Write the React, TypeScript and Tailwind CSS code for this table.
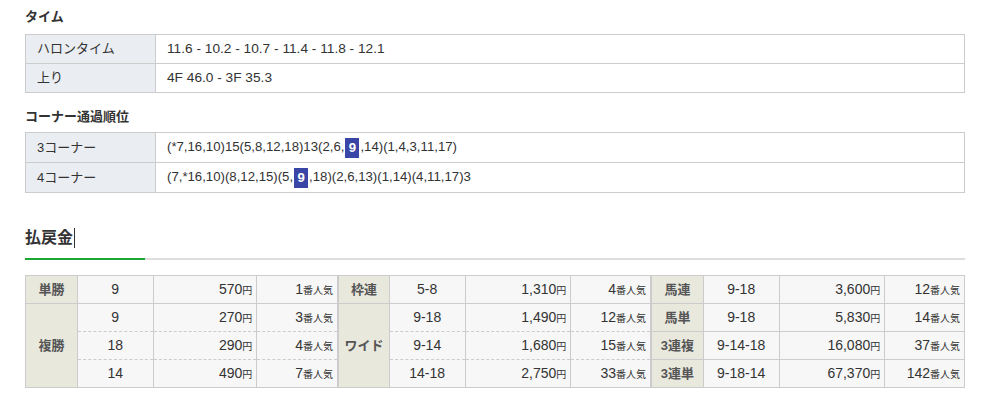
import type { ReactNode } from 'react';

const FONT = "font-['Liberation_Sans','Noto_Sans_CJK_JP',sans-serif]";

const Hl = ({ n }: { n: string }) => (
  <span className="inline-block w-[14px] h-[20px] leading-[20px] mx-[1px] text-center font-bold text-white bg-[#3a46a6] align-middle">
    {n}
  </span>
);

const InfoTable = ({ rows, h, size }: { rows: [string, ReactNode][]; h: string; size: string }) => (
  <table className="w-full table-fixed border-collapse border border-[#ccc] text-[#333]">
    <colgroup>
      <col className="w-[130px]" />
      <col />
    </colgroup>
    <tbody>
      {rows.map(([label, val]) => (
        <tr key={label} className={h}>
          <td className="border border-[#ccc] bg-[#eaedf1] pl-[11px] text-[13px]">{label}</td>
          <td className={`border border-[#ccc] pl-[11px] whitespace-nowrap ${size}`}>{val}</td>
        </tr>
      ))}
    </tbody>
  </table>
);

type Row = { no: string; pay: string; pop: string };
type Group = { label: string; rows: Row[] };

const solid = 'border-x border-t border-[#ccc]';
const dashed = 'border-x border-[#ccc] [border-top:1px_dashed_#ccc]';

const PayTable = ({ groups, widths }: { groups: Group[]; widths: string[] }) => (
  <table className="table-fixed border-collapse border border-[#ccc] text-[14px] text-[#333]">
    <colgroup>
      {widths.map((w, i) => (
        <col key={i} className={w} />
      ))}
    </colgroup>
    <tbody>
      {groups.flatMap((g) =>
        g.rows.map((r, i) => {
          const c = i === 0 ? solid : dashed;
          return (
            <tr key={g.label + i} className="h-[28px]">
              {i === 0 && (
                <th
                  rowSpan={g.rows.length}
                  className={`${solid} bg-[#e8e8dd] text-[13px] font-bold text-[#555] text-center align-middle`}
                >
                  {g.label}
                </th>
              )}
              <td className={`${c} bg-[#f7f7f7] text-center`}>{r.no}</td>
              <td className={`${c} bg-[#f7f7f7] text-right pr-[4px]`}>
                {r.pay}
                <span className="text-[10px]">円</span>
              </td>
              <td className={`${c} bg-[#f7f7f7] text-right pr-[4px]`}>
                {r.pop}
                <span className="text-[10px]">番人気</span>
              </td>
            </tr>
          );
        })
      )}
    </tbody>
  </table>
);

export default function App() {
  return (
    <div className={`${FONT} w-[940px] ml-[25px] pt-[7px] bg-white`}>
      <h3 className="text-[13px] font-bold leading-[20px] text-[#333] mb-[7px]">タイム</h3>
      <InfoTable
        h="h-[29px]"
        size="text-[13.7px]"
        rows={[
          ['ハロンタイム', '11.6 - 10.2 - 10.7 - 11.4 - 11.8 - 12.1'],
          ['上り', '4F 46.0 - 3F 35.3'],
        ]}
      />

      <h3 className="text-[13px] font-bold leading-[20px] text-[#333] mt-[14px] mb-[5px]">コーナー通過順位</h3>
      <InfoTable
        h="h-[30px]"
        size="text-[13.2px]"
        rows={[
          [
            '3コーナー',
            <>
              (*7,16,10)15(5,8,12,18)13(2,6,<Hl n="9" />,14)(1,4,3,11,17)
            </>,
          ],
          [
            '4コーナー',
            <>
              (7,*16,10)(8,12,15)(5,<Hl n="9" />,18)(2,6,13)(1,14)(4,11,17)3
            </>,
          ],
        ]}
      />

      <div className="mt-[33px] flex items-center h-[24px]">
        <h2 className="text-[16px] font-bold text-[#333] leading-[24px]">払戻金</h2>
        <span className="ml-[1px] w-px h-[20px] bg-[#333]" />
      </div>
      <div className="mt-[8px] h-[2px] bg-[#ddd]">
        <div className="w-[120px] h-[2px] bg-[#1aa734]" />
      </div>

      <div className="mt-[15px] flex">
        <PayTable
          widths={['w-[52px]', 'w-[76px]', 'w-[104px]', 'w-[81px]']}
          groups={[
            { label: '単勝', rows: [{ no: '9', pay: '570', pop: '1' }] },
            {
              label: '複勝',
              rows: [
                { no: '9', pay: '270', pop: '3' },
                { no: '18', pay: '290', pop: '4' },
                { no: '14', pay: '490', pop: '7' },
              ],
            },
          ]}
        />
        <PayTable
          widths={['w-[51px]', 'w-[76px]', 'w-[106px]', 'w-[80px]']}
          groups={[
            { label: '枠連', rows: [{ no: '5-8', pay: '1,310', pop: '4' }] },
            {
              label: 'ワイド',
              rows: [
                { no: '9-18', pay: '1,490', pop: '12' },
                { no: '9-14', pay: '1,680', pop: '15' },
                { no: '14-18', pay: '2,750', pop: '33' },
              ],
            },
          ]}
        />
        <PayTable
          widths={['w-[52px]', 'w-[76px]', 'w-[106px]', 'w-[80px]']}
          groups={[
            { label: '馬連', rows: [{ no: '9-18', pay: '3,600', pop: '12' }] },
            { label: '馬単', rows: [{ no: '9-18', pay: '5,830', pop: '14' }] },
            { label: '3連複', rows: [{ no: '9-14-18', pay: '16,080', pop: '37' }] },
            { label: '3連単', rows: [{ no: '9-18-14', pay: '67,370', pop: '142' }] },
          ]}
        />
      </div>
    </div>
  );
}
